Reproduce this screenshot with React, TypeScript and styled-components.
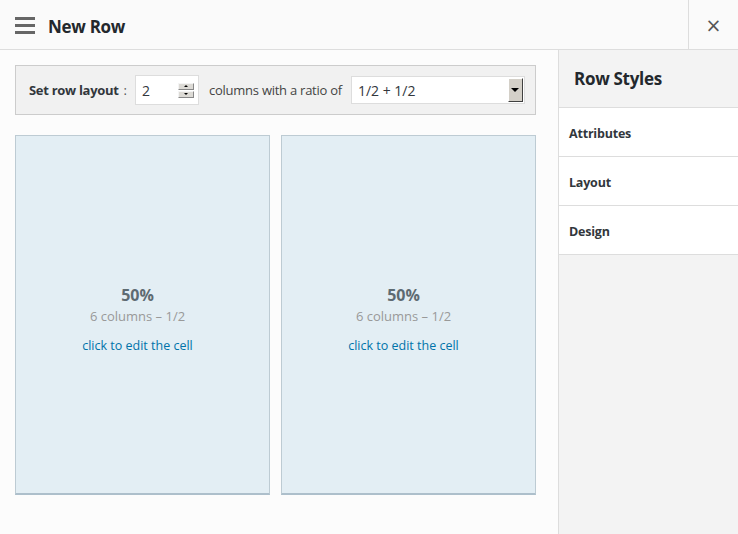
import React from 'react';
import styled, { createGlobalStyle } from 'styled-components';

const GlobalStyle = createGlobalStyle`
  html, body {
    margin: 0;
    padding: 0;
    background: #fcfcfc;
  }
  body {
    font-family: 'Open Sans', 'Noto Sans', sans-serif;
    color: #23282d;
  }
`;

const Modal = styled.div`
  width: 738px;
  height: 534px;
  display: flex;
  flex-direction: column;
  background: #fcfcfc;
  overflow: hidden;
`;

const Header = styled.header`
  height: 49px;
  flex: none;
  display: flex;
  align-items: center;
  background: #fafafa;
  border-bottom: 1px solid #dddddd;
`;

const MenuButton = styled.span`
  width: 20px;
  margin: 2px 13px 0 15px;
  display: flex;
  flex-direction: column;
  gap: 4px;

  & > i {
    display: block;
    height: 3px;
    background: #666666;
  }
`;

const Title = styled.h1`
  flex: 1;
  margin: 4px 0 0;
  font-size: 17px;
  font-weight: 700;
  letter-spacing: -0.3px;
  color: #23282d;
`;

const CloseButton = styled.button`
  width: 50px;
  height: 49px;
  border: 0;
  border-left: 1px solid #dddddd;
  background: transparent;
  color: #555555;
  font-size: 19px;
  font-family: 'DejaVu Sans', sans-serif;
  padding: 0;
  cursor: pointer;
`;

const Body = styled.div`
  flex: 1;
  display: flex;
  min-height: 0;
`;

const Main = styled.main`
  flex: 1;
  min-width: 0;
  padding: 15px 22px 0 15px;
  display: flex;
  flex-direction: column;
  gap: 20px;
`;

const Toolbar = styled.div`
  height: 48px;
  display: flex;
  align-items: center;
  padding: 0 10px 0 13px;
  background: #f1f1f1;
  border: 1px solid #cccccc;
  font-size: 13px;
  color: #444444;
  white-space: nowrap;
  overflow: hidden;

  & > * {
    flex: none;
  }
`;

const Label = styled.span`
  font-weight: 700;
  color: #32373c;
  letter-spacing: -0.3px;
`;

const Colon = styled.span`
  margin: 0 8px 0 5px;
  color: #555555;
`;

const NumberBox = styled.div`
  width: 64px;
  height: 30px;
  display: flex;
  align-items: center;
  justify-content: space-between;
  padding: 0 4px 0 6px;
  box-sizing: border-box;
  background: #ffffff;
  border: 1px solid #dddddd;
  font-size: 14px;
  color: #32373c;
`;

const Spinner = styled.span`
  width: 16px;
  display: flex;
  flex-direction: column;
  gap: 1px;
`;

const SpinPart = styled.span<{ $dir: 'up' | 'down' }>`
  height: 7px;
  background: #dcdad5;
  border: 1px solid #888888;
  border-top-color: #f4f4f4;
  border-left-color: #f4f4f4;
  box-sizing: border-box;
  display: flex;
  align-items: center;
  justify-content: center;

  &::after {
    content: '';
    border-left: 2px solid transparent;
    border-right: 2px solid transparent;
    ${(p) => (p.$dir === 'up' ? 'border-bottom: 2px solid #000;' : 'border-top: 2px solid #000;')}
  }
`;

const Text = styled.span`
  margin: 0 9px 0 10px;
  color: #444444;
  letter-spacing: -0.25px;
`;

const Select = styled.div`
  width: 174px;
  height: 28px;
  display: flex;
  align-items: stretch;
  box-sizing: border-box;
  background: #ffffff;
  border: 1px solid #dddddd;
  font-size: 14px;
  color: #32373c;
`;

const SelectValue = styled.span`
  flex: 1;
  display: flex;
  align-items: center;
  padding-left: 6px;
`;

const SelectArrow = styled.span`
  width: 15px;
  margin: 1px;
  background: #d4d0c8;
  border: 1px solid #404040;
  border-top-color: #ffffff;
  border-left-color: #ffffff;
  box-sizing: border-box;
  display: flex;
  align-items: center;
  justify-content: center;

  &::after {
    content: '';
    border-left: 4px solid transparent;
    border-right: 4px solid transparent;
    border-top: 4px solid #000000;
  }
`;

const Cells = styled.div`
  display: grid;
  grid-template-columns: 1fr 1fr;
  gap: 11px;
`;

const Cell = styled.div`
  height: 360px;
  display: flex;
  flex-direction: column;
  align-items: center;
  justify-content: center;
  padding: 10px 10px 0 0;
  box-sizing: border-box;
  background: #e3eef4;
  border: 1px solid #bdcbd3;
  border-bottom: 2px solid #adbfcb;
  cursor: pointer;
`;

const Percent = styled.div`
  font-size: 16px;
  font-weight: 700;
  color: #5e6b72;
  line-height: 22px;
`;

const Fraction = styled.div`
  font-size: 13px;
  color: #999999;
  line-height: 20px;
`;

const EditLink = styled.a`
  margin-top: 10px;
  font-size: 12.5px;
  color: #0073aa;
  line-height: 20px;
  text-decoration: none;
`;

const Sidebar = styled.aside`
  width: 179px;
  flex: none;
  background: #f3f3f3;
  border-left: 1px solid #dddddd;
  display: flex;
  flex-direction: column;
`;

const SidebarTitle = styled.h2`
  height: 57px;
  margin: 0;
  padding-left: 15px;
  display: flex;
  align-items: center;
  font-size: 17px;
  font-weight: 700;
  color: #23282d;
  letter-spacing: -0.3px;
  border-bottom: 1px solid #dddddd;
`;

const SidebarItem = styled.div`
  height: 49px;
  padding: 2px 0 0 10px;
  box-sizing: border-box;
  display: flex;
  align-items: center;
  background: #ffffff;
  border-bottom: 1px solid #dddddd;
  font-size: 12.5px;
  font-weight: 700;
  color: #32373c;
  letter-spacing: -0.2px;
`;

const cells = [
  { percent: '50%', label: '6 columns – 1/2' },
  { percent: '50%', label: '6 columns – 1/2' },
];

export default function App() {
  return (
    <>
      <GlobalStyle />
      <Modal>
        <Header>
          <MenuButton>
            <i />
            <i />
            <i />
          </MenuButton>
          <Title>New Row</Title>
          <CloseButton aria-label="Close">×</CloseButton>
        </Header>
        <Body>
          <Main>
            <Toolbar>
              <Label>Set row layout</Label>
              <Colon>:</Colon>
              <NumberBox>
                2
                <Spinner>
                  <SpinPart $dir="up" />
                  <SpinPart $dir="down" />
                </Spinner>
              </NumberBox>
              <Text>columns with a ratio of</Text>
              <Select>
                <SelectValue>1/2 + 1/2</SelectValue>
                <SelectArrow />
              </Select>
            </Toolbar>
            <Cells>
              {cells.map((c, i) => (
                <Cell key={i}>
                  <Percent>{c.percent}</Percent>
                  <Fraction>{c.label}</Fraction>
                  <EditLink>click to edit the cell</EditLink>
                </Cell>
              ))}
            </Cells>
          </Main>
          <Sidebar>
            <SidebarTitle>Row Styles</SidebarTitle>
            <SidebarItem>Attributes</SidebarItem>
            <SidebarItem>Layout</SidebarItem>
            <SidebarItem>Design</SidebarItem>
          </Sidebar>
        </Body>
      </Modal>
    </>
  );
}
